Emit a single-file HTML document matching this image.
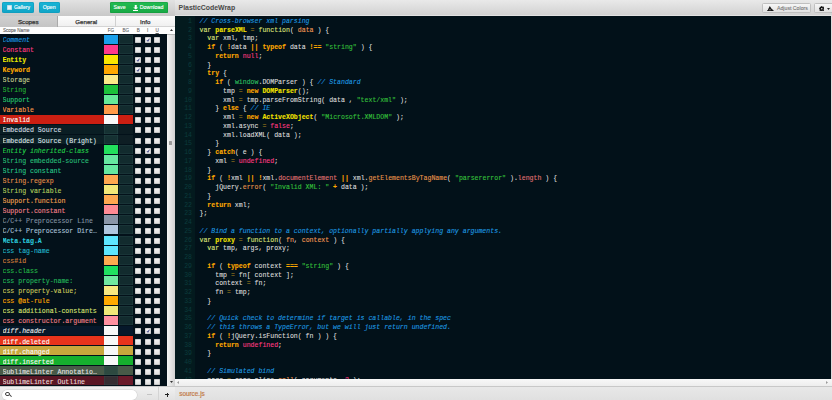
<!DOCTYPE html>
<html><head><meta charset="utf-8">
<style>
*{margin:0;padding:0;box-sizing:border-box}
html,body{width:832px;height:400px;overflow:hidden;background:#e6e6e6;font-family:"Liberation Sans",sans-serif}
.abs{position:absolute}
#tb{position:absolute;left:0;top:0;width:832px;height:15.5px;background:linear-gradient(#e9e9e9,#d2d2d2);border-bottom:1px solid #e2e2e2}
#tbl{position:absolute;left:0;top:0;width:174.5px;height:15.5px;background:linear-gradient(#e2e2e2,#c8c8c8)}
.btn{position:absolute;white-space:nowrap;top:2px;height:11px;border-radius:1.5px;color:#fff;font-size:5.3px;-webkit-text-stroke:0.12px #fff;line-height:11px;text-align:center}
.blue{background:linear-gradient(#18b4d6,#10a4c6);box-shadow:0 0 0 0.5px #0f97b8 inset;border-radius:2px}
.green{background:linear-gradient(#22bc52,#17a844);box-shadow:0 0 0 0.5px #14963c inset}
#title{position:absolute;left:178.6px;top:4.1px;font-size:6.9px;font-weight:bold;color:#484848;letter-spacing:0px}
.gbtn{position:absolute;white-space:nowrap;top:3px;height:10px;border-radius:1.5px;background:linear-gradient(#f6f6f6,#e2e2e2);border:0.5px solid #c0c0c0;color:#777;font-size:5.2px;line-height:9.3px;-webkit-text-stroke:0.1px #777}
#tabs{position:absolute;left:0;top:15.5px;width:174.5px;height:11px;background:linear-gradient(#fcfcfc,#f0f0f0);border-bottom:0.5px solid #d4d4d4}
.tab{position:absolute;top:0;height:11px;font-size:6.2px;color:#333;-webkit-text-stroke:0.25px #333;text-align:center;line-height:11px}
#hdr{position:absolute;left:0;top:26.5px;width:174.5px;height:8px;background:#fdfdfd;border-bottom:0.5px solid #b8b8b8}
.hl{position:absolute;top:1.6px;font-size:4.6px;color:#5c5c5c;-webkit-text-stroke:0.08px #5c5c5c}
#list{position:absolute;left:0;top:34px;width:167px;height:352.3px;background:#03111a;overflow:hidden}
#vs{position:absolute;left:167px;top:34.5px;width:8px;height:352px;background:linear-gradient(90deg,#f6f6f6,#d2d2d2)}
.row{position:absolute;left:0;width:167px;height:10.05px}
.row .rbg{position:absolute;left:0;top:0;width:133px;height:9px}
.nm{position:absolute;left:2.5px;top:1.2px;-webkit-text-stroke:0.12px currentColor;width:96px;height:10px;line-height:10px;font-family:"Liberation Mono",monospace;font-size:6.55px;white-space:nowrap;overflow:hidden;text-overflow:ellipsis}
.it{font-style:italic}
.bd{font-weight:bold}
.sw{position:absolute;top:0;height:9px}
.sw.fg{left:103.5px;width:14.5px}
.sw.bg{left:118.5px;width:14.5px}
.sw.none{background:rgba(28,62,60,0.6);box-shadow:inset 0 0 0 0.6px rgba(70,110,105,0.3)}
.cb{position:absolute;top:2.5px;width:6px;height:6px;border-radius:0.8px;background:linear-gradient(#f6f6f6,#dedede);box-shadow:inset 0 0 0 0.4px #aaa}
.cb svg{display:block}
.c0{left:135px} .c1{left:144.6px} .c2{left:154px}
#search{position:absolute;left:0;top:386.4px;width:174.5px;height:14px;background:linear-gradient(#f0f0f0,#e2e2e2);border-top:0.5px solid #c8c8c8}
#sin{position:absolute;left:2px;top:2.3px;width:135px;height:10px;border-radius:5px;background:#fff;box-shadow:0 0 0 0.5px #cfcfcf}
#ed{position:absolute;left:175px;top:15.5px;width:655.5px;height:363px;background:#021119;overflow:hidden}
#gut{position:absolute;left:0;top:0;width:19.5px;height:363px;background:#031a1e}
.gn{position:absolute;left:0;width:17px;text-align:right;font-family:"Liberation Mono",monospace;font-size:6.5px;line-height:8.75px;color:#0b3b3c;height:8.75px}
.ln{position:absolute;left:24.5px;-webkit-text-stroke:0.1px currentColor;white-space:pre;font-family:"Liberation Mono",monospace;font-size:6.55px;line-height:8.75px;color:#dcdcdc;height:8.75px}
.c{color:#1e9ae0;font-style:italic}
.s{color:#dfe67a}
.e{color:#f2e200;font-weight:bold}
.k{color:#ffaa00;font-weight:bold}
.p{color:#f49a54}
.q{color:#36c23c}
.n{color:#ff3a83}
.u{color:#2ec060}
.x{color:#e07474}
.f{color:#e8964c}
.o{color:#b08a1c}
#hs{position:absolute;left:175px;top:378.5px;width:657px;height:8px;background:linear-gradient(#f8f8f8,#ececec)}
#rs{position:absolute;left:830.5px;top:15.5px;width:1.5px;height:363px;background:#dcdcdc}
#bot{position:absolute;left:175px;top:386px;width:657px;height:14px;background:linear-gradient(#e8e8e8,#e0e0e0);border-top:0.5px solid #c8c8c8}
#srcjs{position:absolute;left:4.2px;top:3.2px;font-size:6.4px;color:#c27a48;-webkit-text-stroke:0.2px #c27a48}
</style></head><body>
<div id="tb"></div>
<div id="tbl"></div>
<div class="btn blue" style="left:2px;width:32px"><span style="position:absolute;left:4.8px;top:3px;width:5px;height:5px;background:#e8f4f8;box-shadow:0 0 0 0.5px #9cd inset"></span><span style="position:absolute;left:11.9px;font-size:5.1px">Gallery</span></div>
<div class="btn blue" style="left:39px;width:21.3px"><span style="position:absolute;left:3.7px">Open</span></div>
<div class="btn green" style="left:109.5px;width:58.5px"><span style="position:absolute;left:4px">Save</span><svg style="position:absolute;left:23.3px;top:2.6px" width="5.5" height="6" viewBox="0 0 11 12"><path d="M3.5 0h4v5h3L5.5 9 0.5 5h3z M0 10h11v2H0z" fill="#fff"/></svg><span style="position:absolute;left:30.3px">Download</span></div>
<div id="title">PlasticCodeWrap</div>
<div class="gbtn" style="left:761.5px;width:49.5px"><svg style="position:absolute;left:4.5px;top:1.6px" width="6.5" height="5.5" viewBox="0 0 13 11"><path d="M5.5 0 L9.5 6 L11 6 L11 8 L13 8 L13 11 L0 11 L0 8.5 L2 8.5 L2 7 Z" fill="#1a1a1a"/><path d="M4 7.5 L8 7.5" stroke="#eee" stroke-width="0.8"/></svg><span style="position:absolute;left:14.5px">Adjust Colors</span></div>
<div class="gbtn" style="left:813.5px;width:22px"><svg style="position:absolute;left:4.2px;top:1.9px" width="5.6" height="5.6" viewBox="-6 -6 12 12"><g fill="#111"><circle r="4"/><rect x="-1.3" y="-6" width="2.6" height="12"/><rect x="-1.3" y="-6" width="2.6" height="12" transform="rotate(45)"/><rect x="-1.3" y="-6" width="2.6" height="12" transform="rotate(90)"/><rect x="-1.3" y="-6" width="2.6" height="12" transform="rotate(135)"/></g><circle r="1.7" fill="#e8e8e8"/></svg><svg style="position:absolute;left:12.5px;top:4px" width="3" height="2" viewBox="0 0 3 2"><path d="M0 0h3L1.5 2z" fill="#222"/></svg></div>
<div id="tabs">
  <div class="tab" style="left:0;width:57.5px;background:linear-gradient(#d0d0d0,#c4c4c4);border-right:0.5px solid #aaa">Scopes</div>
  <div class="tab" style="left:58px;width:57.5px;border-right:0.5px solid #d0d0d0">General</div>
  <div class="tab" style="left:116px;width:58.5px">Info</div>
</div>
<div id="hdr">
  <div class="hl" style="left:3px">Scope Name</div>
  <div class="hl" style="left:107.8px">FG</div>
  <div class="hl" style="left:122.4px">BG</div>
  <div class="hl" style="left:136.8px">B</div>
  <div class="hl" style="left:147px">I</div>
  <div class="hl" style="left:155.5px;text-decoration:underline">U</div>
</div>
<div id="vs"><div style="position:absolute;left:2.3px;top:106.5px;width:2.6px;height:3.5px;background:#9a9a9a;border-radius:0.5px"></div><svg style="position:absolute;left:2.6px;top:-5.4px" width="3" height="2" viewBox="0 0 3 2"><path d="M1.5 0L3 2H0z" fill="#333"/></svg><svg style="position:absolute;left:2.6px;top:346.5px" width="3" height="2" viewBox="0 0 3 2"><path d="M0 0h3L1.5 2z" fill="#333"/></svg></div>
<div id="list">
<div class="row" style="top:1px;"><div class="nm it" style="color:#1e9ae0;top:1.00px">Comment</div><div class="sw fg" style="background:#1aa0ea"></div><div class="sw bg none"></div><div class="cb c0" style="top:2.00px"></div><div class="cb c1" style="top:2.00px"><svg viewBox="0 0 6 6" width="6" height="6"><path d="M2 3.1 L2.9 4.3 L4.3 1.7" stroke="#262a78" stroke-width="0.85" fill="none"/></svg></div><div class="cb c2" style="top:2.00px"></div></div>
<div class="row" style="top:11px;"><div class="nm" style="color:#ff3a83;top:1.05px">Constant</div><div class="sw fg" style="background:#ff3a8a"></div><div class="sw bg none"></div><div class="cb c0" style="top:2.05px"></div><div class="cb c1" style="top:2.05px"></div><div class="cb c2" style="top:2.05px"></div></div>
<div class="row" style="top:21px;"><div class="nm bd" style="color:#e8e800;top:1.10px">Entity</div><div class="sw fg" style="background:#fbe600"></div><div class="sw bg none"></div><div class="cb c0" style="top:2.10px"><svg viewBox="0 0 6 6" width="6" height="6"><path d="M2 3.1 L2.9 4.3 L4.3 1.7" stroke="#262a78" stroke-width="0.85" fill="none"/></svg></div><div class="cb c1" style="top:2.10px"></div><div class="cb c2" style="top:2.10px"></div></div>
<div class="row" style="top:31px;"><div class="nm bd" style="color:#ffaa00;top:1.15px">Keyword</div><div class="sw fg" style="background:#ffa800"></div><div class="sw bg none"></div><div class="cb c0" style="top:2.15px"><svg viewBox="0 0 6 6" width="6" height="6"><path d="M2 3.1 L2.9 4.3 L4.3 1.7" stroke="#262a78" stroke-width="0.85" fill="none"/></svg></div><div class="cb c1" style="top:2.15px"></div><div class="cb c2" style="top:2.15px"></div></div>
<div class="row" style="top:41px;"><div class="nm" style="color:#c4d090;top:1.20px">Storage</div><div class="sw fg" style="background:#fbea88"></div><div class="sw bg none"></div><div class="cb c0" style="top:2.20px"></div><div class="cb c1" style="top:2.20px"></div><div class="cb c2" style="top:2.20px"></div></div>
<div class="row" style="top:51px;"><div class="nm" style="color:#24b034;top:1.25px">String</div><div class="sw fg" style="background:#1cc23a"></div><div class="sw bg none"></div><div class="cb c0" style="top:2.25px"></div><div class="cb c1" style="top:2.25px"></div><div class="cb c2" style="top:2.25px"></div></div>
<div class="row" style="top:61px;"><div class="nm" style="color:#26c870;top:1.30px">Support</div><div class="sw fg" style="background:#66ea98"></div><div class="sw bg none"></div><div class="cb c0" style="top:2.30px"></div><div class="cb c1" style="top:2.30px"></div><div class="cb c2" style="top:2.30px"></div></div>
<div class="row" style="top:71px;"><div class="nm" style="color:#fb9a4b;top:1.35px">Variable</div><div class="sw fg" style="background:#ff9a48"></div><div class="sw bg none"></div><div class="cb c0" style="top:2.35px"></div><div class="cb c1" style="top:2.35px"></div><div class="cb c2" style="top:2.35px"></div></div>
<div class="row" style="top:81px;"><div class="rbg" style="background:#cc1f12"></div><div class="nm" style="color:#f8f8f8;top:1.40px">Invalid</div><div class="sw fg" style="background:#f8f8f8"></div><div class="sw bg" style="background:#cc1f12"></div><div class="cb c0" style="top:2.40px"></div><div class="cb c1" style="top:2.40px"></div><div class="cb c2" style="top:2.40px"></div></div>
<div class="row" style="top:91px;"><div class="rbg" style="background:#0a1e24"></div><div class="nm" style="color:#d0dce0;top:1.45px">Embedded Source</div><div class="sw fg none"></div><div class="sw bg" style="background:#0c1c22"></div><div class="cb c0" style="top:2.45px"></div><div class="cb c1" style="top:2.45px"></div><div class="cb c2" style="top:2.45px"></div></div>
<div class="row" style="top:101px;"><div class="rbg" style="background:#0b1f25"></div><div class="nm" style="color:#d8e0e4;top:1.50px">Embedded Source (Bright)</div><div class="sw fg none"></div><div class="sw bg" style="background:#0e1e24"></div><div class="cb c0" style="top:2.50px"></div><div class="cb c1" style="top:2.50px"></div><div class="cb c2" style="top:2.50px"></div></div>
<div class="row" style="top:111px;"><div class="nm it" style="color:#24d04a;top:1.55px">Entity inherited-class</div><div class="sw fg" style="background:#22e05c"></div><div class="sw bg none"></div><div class="cb c0" style="top:2.55px"></div><div class="cb c1" style="top:2.55px"><svg viewBox="0 0 6 6" width="6" height="6"><path d="M2 3.1 L2.9 4.3 L4.3 1.7" stroke="#262a78" stroke-width="0.85" fill="none"/></svg></div><div class="cb c2" style="top:2.55px"></div></div>
<div class="row" style="top:121px;"><div class="nm" style="color:#28be78;top:1.60px">String embedded-source</div><div class="sw fg" style="background:#66e8a0"></div><div class="sw bg none"></div><div class="cb c0" style="top:2.60px"></div><div class="cb c1" style="top:2.60px"></div><div class="cb c2" style="top:2.60px"></div></div>
<div class="row" style="top:131px;"><div class="nm" style="color:#28c486;top:1.65px">String constant</div><div class="sw fg" style="background:#66e8a0"></div><div class="sw bg none"></div><div class="cb c0" style="top:2.65px"></div><div class="cb c1" style="top:2.65px"></div><div class="cb c2" style="top:2.65px"></div></div>
<div class="row" style="top:141px;"><div class="nm" style="color:#e08e48;top:1.70px">String.regexp</div><div class="sw fg" style="background:#ffa850"></div><div class="sw bg none"></div><div class="cb c0" style="top:2.70px"></div><div class="cb c1" style="top:2.70px"></div><div class="cb c2" style="top:2.70px"></div></div>
<div class="row" style="top:151px;"><div class="nm" style="color:#b0cc5c;top:1.75px">String variable</div><div class="sw fg" style="background:#f4e878"></div><div class="sw bg none"></div><div class="cb c0" style="top:2.75px"></div><div class="cb c1" style="top:2.75px"></div><div class="cb c2" style="top:2.75px"></div></div>
<div class="row" style="top:161px;"><div class="nm" style="color:#f0a050;top:1.80px">Support.function</div><div class="sw fg" style="background:#ffa850"></div><div class="sw bg none"></div><div class="cb c0" style="top:2.80px"></div><div class="cb c1" style="top:2.80px"></div><div class="cb c2" style="top:2.80px"></div></div>
<div class="row" style="top:171px;"><div class="nm" style="color:#f08088;top:1.85px">Support.constant</div><div class="sw fg" style="background:#ff8a94"></div><div class="sw bg none"></div><div class="cb c0" style="top:2.85px"></div><div class="cb c1" style="top:2.85px"></div><div class="cb c2" style="top:2.85px"></div></div>
<div class="row" style="top:181px;"><div class="nm" style="color:#8090a0;top:1.90px">C/C++ Preprocessor Line</div><div class="sw fg" style="background:#8a96a8"></div><div class="sw bg none"></div><div class="cb c0" style="top:2.90px"></div><div class="cb c1" style="top:2.90px"></div><div class="cb c2" style="top:2.90px"></div></div>
<div class="row" style="top:191px;"><div class="nm" style="color:#a8c0d8;top:1.95px">C/C++ Preprocessor Directive</div><div class="sw fg" style="background:#b0c6de"></div><div class="sw bg none"></div><div class="cb c0" style="top:2.95px"></div><div class="cb c1" style="top:2.95px"></div><div class="cb c2" style="top:2.95px"></div></div>
<div class="row" style="top:202px;"><div class="nm bd" style="color:#2cc8dc;top:1.00px">Meta.tag.A</div><div class="sw fg" style="background:#5ee6ff"></div><div class="sw bg none"></div><div class="cb c0" style="top:2.00px"></div><div class="cb c1" style="top:2.00px"></div><div class="cb c2" style="top:2.00px"></div></div>
<div class="row" style="top:212px;"><div class="nm" style="color:#22b6cc;top:1.05px">css tag-name</div><div class="sw fg" style="background:#5ee6ff"></div><div class="sw bg none"></div><div class="cb c0" style="top:2.05px"></div><div class="cb c1" style="top:2.05px"></div><div class="cb c2" style="top:2.05px"></div></div>
<div class="row" style="top:222px;"><div class="nm" style="color:#d27e3a;top:1.10px">css#id</div><div class="sw fg" style="background:#ffaa50"></div><div class="sw bg none"></div><div class="cb c0" style="top:2.10px"></div><div class="cb c1" style="top:2.10px"></div><div class="cb c2" style="top:2.10px"></div></div>
<div class="row" style="top:232px;"><div class="nm" style="color:#24b646;top:1.15px">css.class</div><div class="sw fg" style="background:#20e060"></div><div class="sw bg none"></div><div class="cb c0" style="top:2.15px"></div><div class="cb c1" style="top:2.15px"></div><div class="cb c2" style="top:2.15px"></div></div>
<div class="row" style="top:242px;"><div class="nm" style="color:#24b85a;top:1.20px">css property-name:</div><div class="sw fg" style="background:#70e8a0"></div><div class="sw bg none"></div><div class="cb c0" style="top:2.20px"></div><div class="cb c1" style="top:2.20px"></div><div class="cb c2" style="top:2.20px"></div></div>
<div class="row" style="top:252px;"><div class="nm" style="color:#c8c85a;top:1.25px">css property-value;</div><div class="sw fg" style="background:#f8e880"></div><div class="sw bg none"></div><div class="cb c0" style="top:2.25px"></div><div class="cb c1" style="top:2.25px"></div><div class="cb c2" style="top:2.25px"></div></div>
<div class="row" style="top:262px;"><div class="nm" style="color:#ffaa00;top:1.30px">css @at-rule</div><div class="sw fg" style="background:#ffaa00"></div><div class="sw bg none"></div><div class="cb c0" style="top:2.30px"></div><div class="cb c1" style="top:2.30px"></div><div class="cb c2" style="top:2.30px"></div></div>
<div class="row" style="top:272px;"><div class="nm" style="color:#d8e070;top:1.35px">css additional-constants</div><div class="sw fg" style="background:#f0e878"></div><div class="sw bg none"></div><div class="cb c0" style="top:2.35px"></div><div class="cb c1" style="top:2.35px"></div><div class="cb c2" style="top:2.35px"></div></div>
<div class="row" style="top:282px;"><div class="nm" style="color:#f08088;top:1.40px">css constructor.argument</div><div class="sw fg" style="background:#ff90a0"></div><div class="sw bg none"></div><div class="cb c0" style="top:2.40px"></div><div class="cb c1" style="top:2.40px"></div><div class="cb c2" style="top:2.40px"></div></div>
<div class="row" style="top:292px;"><div class="rbg" style="background:#06182a"></div><div class="nm it" style="color:#e8e8e8;top:1.45px">diff.header</div><div class="sw fg" style="background:#f8f8f8"></div><div class="sw bg" style="background:#06182a"></div><div class="cb c0" style="top:2.45px"></div><div class="cb c1" style="top:2.45px"><svg viewBox="0 0 6 6" width="6" height="6"><path d="M2 3.1 L2.9 4.3 L4.3 1.7" stroke="#262a78" stroke-width="0.85" fill="none"/></svg></div><div class="cb c2" style="top:2.45px"></div></div>
<div class="row" style="top:302px;"><div class="rbg" style="background:#e8341c"></div><div class="nm" style="color:#f8f8f8;top:1.50px">diff.deleted</div><div class="sw fg" style="background:#f8f8f8"></div><div class="sw bg" style="background:#e8341c"></div><div class="cb c0" style="top:2.50px"></div><div class="cb c1" style="top:2.50px"></div><div class="cb c2" style="top:2.50px"></div></div>
<div class="row" style="top:312px;"><div class="rbg" style="background:#c8a83c"></div><div class="nm" style="color:#f8f8f8;top:1.55px">diff.changed</div><div class="sw fg" style="background:#f8f8f8"></div><div class="sw bg" style="background:#c8a83c"></div><div class="cb c0" style="top:2.55px"></div><div class="cb c1" style="top:2.55px"></div><div class="cb c2" style="top:2.55px"></div></div>
<div class="row" style="top:322px;"><div class="rbg" style="background:#16b02e"></div><div class="nm" style="color:#f8f8f8;top:1.60px">diff.inserted</div><div class="sw fg" style="background:#f8f8f8"></div><div class="sw bg" style="background:#16b02e"></div><div class="cb c0" style="top:2.60px"></div><div class="cb c1" style="top:2.60px"></div><div class="cb c2" style="top:2.60px"></div></div>
<div class="row" style="top:332px;"><div class="rbg" style="background:#485a48"></div><div class="nm" style="color:#e0e0e0;top:1.65px">SublimeLinter Annotations</div><div class="sw fg none"></div><div class="sw bg" style="background:#485a48"></div><div class="cb c0" style="top:2.65px"></div><div class="cb c1" style="top:2.65px"></div><div class="cb c2" style="top:2.65px"></div></div>
<div class="row" style="top:342px;"><div class="rbg" style="background:#5a1624"></div><div class="nm" style="color:#e8d8d8;top:1.70px">SublimeLinter Outline</div><div class="sw fg none"></div><div class="sw bg" style="background:#6a1a2a"></div><div class="cb c0" style="top:2.70px"></div><div class="cb c1" style="top:2.70px"></div><div class="cb c2" style="top:2.70px"></div></div>
</div>
<div id="search"><div id="sin"><div style="position:absolute;left:3.3px;top:1.9px;width:4.3px;height:4.3px;border:1px solid #444;border-radius:50%"></div><div style="position:absolute;left:6.8px;top:5.6px;width:2.6px;height:1.3px;background:#444;transform:rotate(45deg)"></div></div>
<div style="position:absolute;left:147.2px;top:6.9px;width:4.4px;height:0.8px;background:#c4c4c4"></div>
<div style="position:absolute;left:158.3px;top:0;width:0.6px;height:14px;background:#d4d4d4"></div>
<div style="position:absolute;left:165.3px;top:7.1px;width:3.4px;height:1px;background:#222"></div><div style="position:absolute;left:166.5px;top:5.9px;width:1px;height:3.4px;background:#222"></div>
</div>
<div id="ed">
<div id="gut">
<div class="gn" style="top:2.40px">1</div><div class="gn" style="top:11.15px">2</div><div class="gn" style="top:19.90px">3</div><div class="gn" style="top:28.65px">4</div><div class="gn" style="top:37.40px">5</div><div class="gn" style="top:46.15px">6</div><div class="gn" style="top:54.90px">7</div><div class="gn" style="top:63.65px">8</div><div class="gn" style="top:72.40px">9</div><div class="gn" style="top:81.15px">10</div><div class="gn" style="top:89.90px">11</div><div class="gn" style="top:98.65px">12</div><div class="gn" style="top:107.40px">13</div><div class="gn" style="top:116.15px">14</div><div class="gn" style="top:124.90px">15</div><div class="gn" style="top:133.65px">16</div><div class="gn" style="top:142.40px">17</div><div class="gn" style="top:151.15px">18</div><div class="gn" style="top:159.90px">19</div><div class="gn" style="top:168.65px">20</div><div class="gn" style="top:177.40px">21</div><div class="gn" style="top:186.15px">22</div><div class="gn" style="top:194.90px">23</div><div class="gn" style="top:203.65px">24</div><div class="gn" style="top:212.40px">25</div><div class="gn" style="top:221.15px">26</div><div class="gn" style="top:229.90px">27</div><div class="gn" style="top:238.65px">28</div><div class="gn" style="top:247.40px">29</div><div class="gn" style="top:256.15px">30</div><div class="gn" style="top:264.90px">31</div><div class="gn" style="top:273.65px">32</div><div class="gn" style="top:282.40px">33</div><div class="gn" style="top:291.15px">34</div><div class="gn" style="top:299.90px">35</div><div class="gn" style="top:308.65px">36</div><div class="gn" style="top:317.40px">37</div><div class="gn" style="top:326.15px">38</div><div class="gn" style="top:334.90px">39</div><div class="gn" style="top:343.65px">40</div><div class="gn" style="top:352.40px">41</div><div class="gn" style="top:361.15px">42</div><div class="gn" style="top:369.90px">43</div>
</div>
<div class="ln" style="top:2.40px"><span class="c">// Cross-browser xml parsing</span></div><div class="ln" style="top:11.15px"><span class="s">var</span> <span class="e">parseXML</span> <span class="o">=</span> <span class="s">function</span>( <span class="p">data</span> ) {</div><div class="ln" style="top:19.90px">  <span class="s">var</span> xml, tmp;</div><div class="ln" style="top:28.65px">  <span class="k">if</span> ( <span class="k">!</span>data <span class="k">||</span> <span class="k">typeof</span> data <span class="k">!==</span> <span class="q">"string"</span> ) {</div><div class="ln" style="top:37.40px">    <span class="k">return</span> <span class="n">null</span>;</div><div class="ln" style="top:46.15px">  }</div><div class="ln" style="top:54.90px">  <span class="k">try</span> {</div><div class="ln" style="top:63.65px">    <span class="k">if</span> ( <span class="u">window</span>.DOMParser ) { <span class="c">// Standard</span></div><div class="ln" style="top:72.40px">      tmp <span class="o">=</span> <span class="k">new</span> <span class="e">DOMParser</span>();</div><div class="ln" style="top:81.15px">      xml <span class="o">=</span> tmp.parseFromString( data , <span class="q">"text/xml"</span> );</div><div class="ln" style="top:89.90px">    } <span class="k">else</span> { <span class="c">// IE</span></div><div class="ln" style="top:98.65px">      xml <span class="o">=</span> <span class="k">new</span> <span class="e">ActiveXObject</span>( <span class="q">"Microsoft.XMLDOM"</span> );</div><div class="ln" style="top:107.40px">      xml.async <span class="o">=</span> <span class="n">false</span>;</div><div class="ln" style="top:116.15px">      xml.loadXML( data );</div><div class="ln" style="top:124.90px">    }</div><div class="ln" style="top:133.65px">  } <span class="k">catch</span>( e ) {</div><div class="ln" style="top:142.40px">    xml <span class="o">=</span> <span class="n">undefined</span>;</div><div class="ln" style="top:151.15px">  }</div><div class="ln" style="top:159.90px">  <span class="k">if</span> ( <span class="k">!</span>xml <span class="k">||</span> <span class="k">!</span>xml.<span class="x">documentElement</span> <span class="k">||</span> xml.<span class="f">getElementsByTagName</span>( <span class="q">"parsererror"</span> ).<span class="x">length</span> ) {</div><div class="ln" style="top:168.65px">    jQuery.<span class="f">error</span>( <span class="q">"Invalid XML: "</span> <span class="k">+</span> data );</div><div class="ln" style="top:177.40px">  }</div><div class="ln" style="top:186.15px">  <span class="k">return</span> xml;</div><div class="ln" style="top:194.90px">};</div><div class="ln" style="top:203.65px"></div><div class="ln" style="top:212.40px"><span class="c">// Bind a function to a context, optionally partially applying any arguments.</span></div><div class="ln" style="top:221.15px"><span class="s">var</span> <span class="e">proxy</span> <span class="o">=</span> <span class="s">function</span>( <span class="p">fn</span>, <span class="p">context</span> ) {</div><div class="ln" style="top:229.90px">  <span class="s">var</span> tmp, args, proxy;</div><div class="ln" style="top:238.65px"></div><div class="ln" style="top:247.40px">  <span class="k">if</span> ( <span class="k">typeof</span> context <span class="k">===</span> <span class="q">"string"</span> ) {</div><div class="ln" style="top:256.15px">    tmp <span class="o">=</span> fn[ context ];</div><div class="ln" style="top:264.90px">    context <span class="o">=</span> fn;</div><div class="ln" style="top:273.65px">    fn <span class="o">=</span> tmp;</div><div class="ln" style="top:282.40px">  }</div><div class="ln" style="top:291.15px"></div><div class="ln" style="top:299.90px">  <span class="c">// Quick check to determine if target is callable, in the spec</span></div><div class="ln" style="top:308.65px">  <span class="c">// this throws a TypeError, but we will just return undefined.</span></div><div class="ln" style="top:317.40px">  <span class="k">if</span> ( <span class="k">!</span>jQuery.isFunction( fn ) ) {</div><div class="ln" style="top:326.15px">    <span class="k">return</span> <span class="n">undefined</span>;</div><div class="ln" style="top:334.90px">  }</div><div class="ln" style="top:343.65px"></div><div class="ln" style="top:352.40px">  <span class="c">// Simulated bind</span></div><div class="ln" style="top:361.15px">  args <span class="o">=</span> core_slice.<span class="f">call</span>( arguments, <span class="n">2</span> );</div><div class="ln" style="top:369.90px">  <span class="k">if</span> ( <span class="k">!</span>jQuery.isFunction( fn ) ) {</div>
</div>
<div id="rs"></div>
<div id="hs"><svg style="position:absolute;left:2.2px;top:2.8px" width="2" height="3" viewBox="0 0 2 3"><path d="M2 0V3L0 1.5z" fill="#9a9a9a"/></svg><svg style="position:absolute;left:651px;top:2.8px" width="2" height="3" viewBox="0 0 2 3"><path d="M0 0V3L2 1.5z" fill="#9a9a9a"/></svg></div>
<div id="bot"><div id="srcjs">source.js</div></div>
</body></html>
